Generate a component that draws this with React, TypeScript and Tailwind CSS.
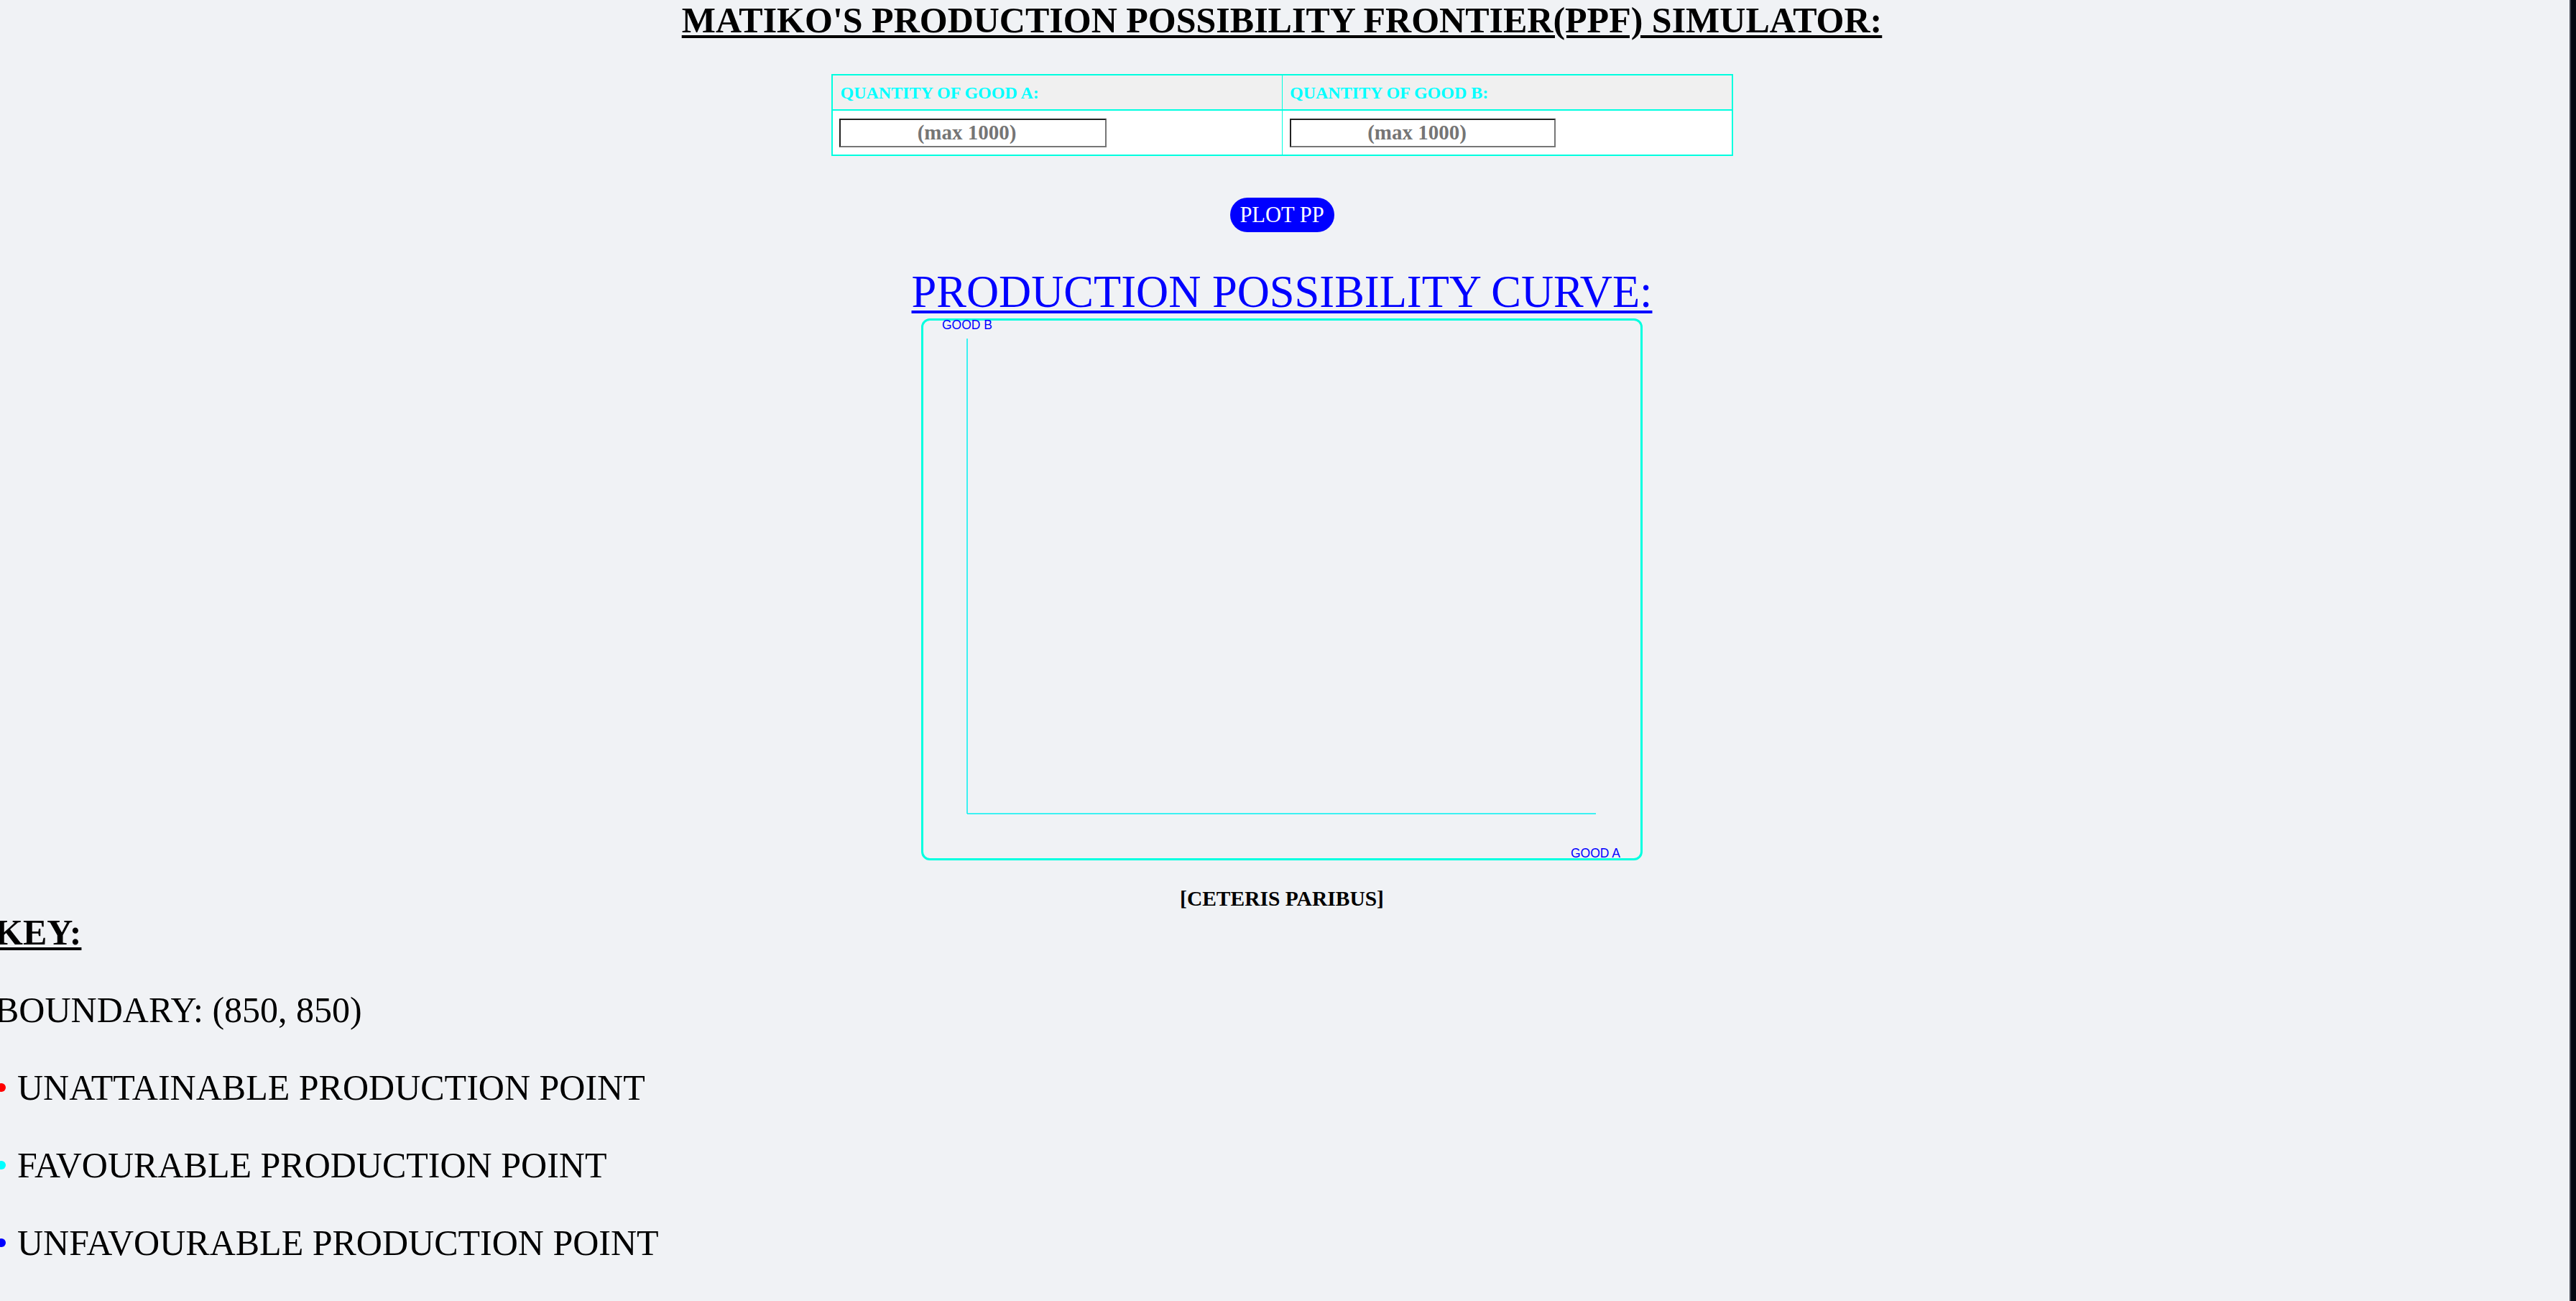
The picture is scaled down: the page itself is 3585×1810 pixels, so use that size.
import React from "react";

function Graph() {
  return (
    <svg width={998} height={748} viewBox="0 0 998 748" className="block overflow-visible">
      <text x={26} y={12} fill="#0000ff" fontSize={17.5} fontFamily="'Liberation Sans', Arial, sans-serif">
        GOOD B
      </text>
      <line x1={61} y1={25} x2={61} y2={686} stroke="#00f0f0" strokeWidth={1.5} />
      <line x1={61} y1={686} x2={936} y2={686} stroke="#00f0f0" strokeWidth={1.5} />
      <text x={901} y={747} fill="#0000ff" fontSize={17.5} fontFamily="'Liberation Sans', Arial, sans-serif">
        GOOD A
      </text>
    </svg>
  );
}

function KeyItem({ color, label }: { color: string; label: string }) {
  return (
    <div className="mt-[52px] flex items-center h-[56px]">
      <span className={`-ml-[4px] w-[12px] h-[12px] rounded-full shrink-0 ${color}`} />
      <span className="ml-[16px] text-[50px] leading-[56px] whitespace-nowrap">{label}</span>
    </div>
  );
}

export default function App() {
  return (
    <div className="min-h-screen w-full flex bg-[#f0f2f5] text-black font-['Liberation_Serif','Times_New_Roman',serif] overflow-hidden">
      <main className="flex-1 min-w-0 pr-[8px] flex flex-col items-center">
        <h1 className="m-0 text-[50px] leading-[56px] font-bold underline decoration-[4px] underline-offset-[4px] text-center whitespace-nowrap">
          MATIKO'S PRODUCTION POSSIBILITY FRONTIER(PPF) SIMULATOR:
        </h1>

        <div className="mt-[47px] w-[1255px] border-2 border-[#00ffe0] grid grid-cols-2">
          <div className="h-[49px] bg-[#f0f0f0] border-b-2 border-[#00ffe0] flex items-center pl-[11px] text-[24px] leading-[28px] font-bold text-[#00ffff]">
            QUANTITY OF GOOD A:
          </div>
          <div className="h-[49px] bg-[#f0f0f0] border-b-2 border-l border-[#00ffe0] flex items-center pl-[10px] text-[24px] leading-[28px] font-bold text-[#00ffff]">
            QUANTITY OF GOOD B:
          </div>
          <div className="h-[61px] bg-white flex items-center pl-[9px]">
            <input
              type="text"
              placeholder="(max 1000)"
              className="w-[372px] h-[40px] border-2 border-solid border-t-[#222222] border-l-[#222222] border-b-[#767676] border-r-[#767676] bg-white text-center pr-[16px] text-[29px] font-bold text-black placeholder:text-[#757575] outline-none font-['Liberation_Serif',serif]"
            />
          </div>
          <div className="h-[61px] bg-white border-l border-[#00ffe0] flex items-center pl-[10px]">
            <input
              type="text"
              placeholder="(max 1000)"
              className="w-[370px] h-[40px] border-2 border-solid border-t-[#222222] border-l-[#222222] border-b-[#767676] border-r-[#767676] bg-white text-center pr-[16px] text-[29px] font-bold text-black placeholder:text-[#757575] outline-none font-['Liberation_Serif',serif]"
            />
          </div>
        </div>

        <button
          type="button"
          className="mt-[58px] w-[145px] h-[48px] rounded-full bg-[#0000ff] text-white text-[30.5px] leading-none flex items-center justify-center font-['Liberation_Serif',serif]"
        >
          PLOT PP
        </button>

        <h2 className="mt-[47px] text-[62.5px] leading-[72px] font-normal text-[#0000ff] underline decoration-[4px] underline-offset-[5px] whitespace-nowrap">
          PRODUCTION POSSIBILITY CURVE:
        </h2>

        <div className="mt-[1px] w-[1004px] h-[754px] border-[3px] border-[#00ffe0] rounded-[12px]">
          <Graph />
        </div>

        <p className="mt-[36px] text-[29.5px] leading-[34px] font-bold">[CETERIS PARIBUS]</p>

        <section className="self-stretch">
          <h3 className="mt-[2px] -ml-[7px] text-[50px] leading-[56px] font-bold underline decoration-[4px] underline-offset-[4px]">
            KEY:
          </h3>
          <p className="mt-[52px] -ml-[7px] text-[50px] leading-[56px] whitespace-nowrap">BOUNDARY: (850, 850)</p>
          <KeyItem color="bg-[#ff0000]" label="UNATTAINABLE PRODUCTION POINT" />
          <KeyItem color="bg-[#00ffff]" label="FAVOURABLE PRODUCTION POINT" />
          <KeyItem color="bg-[#0000ff]" label="UNFAVOURABLE PRODUCTION POINT" />
        </section>
      </main>
      <div className="w-[2px] shrink-0 bg-[#3f434f]" />
      <div className="w-[7px] shrink-0 bg-[#030712]" />
    </div>
  );
}
